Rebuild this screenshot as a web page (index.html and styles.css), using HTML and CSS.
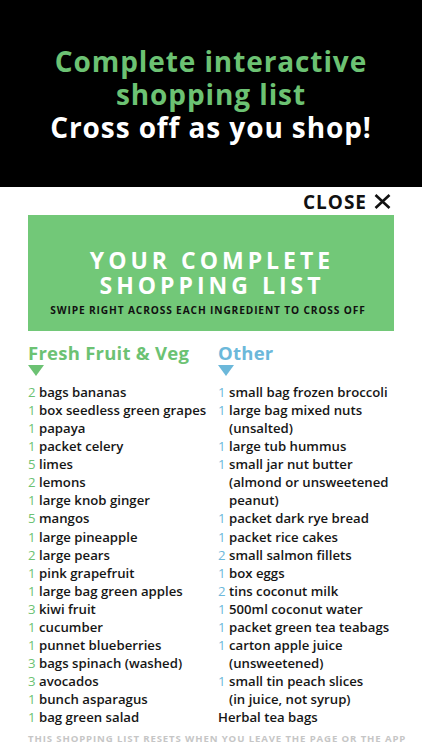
FILE: index.html
```html
<!DOCTYPE html>
<html>
<head>
<meta charset="utf-8">
<link rel="stylesheet" href="styles.css">
</head>
<body>
<header class="hero">
  <p class="hero-text"><span class="green">Complete interactive<br>shopping list</span><br><span class="white">Cross off as you shop!</span></p>
</header>
<div class="close-row">
  <span class="close">CLOSE</span>
  <svg class="close-x" width="17" height="15" viewBox="0 0 17 15"><path d="M1.5 1 L15.5 14 M15.5 1 L1.5 14" stroke="#111" stroke-width="2.6" fill="none"/></svg>
</div>
<section class="banner">
  <p class="banner-title">YOUR COMPLETE<br>SHOPPING LIST</p>
  <p class="banner-sub">SWIPE RIGHT ACROSS EACH INGREDIENT TO CROSS OFF</p>
</section>
<main class="columns">
  <div class="col fruit">
    <h2 class="heading">Fresh Fruit &amp; Veg</h2>
    <div class="tri"></div>
    <ul class="list">
      <li><span class="n">2</span><span class="t">bags bananas</span></li>
      <li><span class="n">1</span><span class="t">box seedless green grapes</span></li>
      <li><span class="n">1</span><span class="t">papaya</span></li>
      <li><span class="n">1</span><span class="t">packet celery</span></li>
      <li><span class="n">5</span><span class="t">limes</span></li>
      <li><span class="n">2</span><span class="t">lemons</span></li>
      <li><span class="n">1</span><span class="t">large knob ginger</span></li>
      <li><span class="n">5</span><span class="t">mangos</span></li>
      <li><span class="n">1</span><span class="t">large pineapple</span></li>
      <li><span class="n">2</span><span class="t">large pears</span></li>
      <li><span class="n">1</span><span class="t">pink grapefruit</span></li>
      <li><span class="n">1</span><span class="t">large bag green apples</span></li>
      <li><span class="n">3</span><span class="t">kiwi fruit</span></li>
      <li><span class="n">1</span><span class="t">cucumber</span></li>
      <li><span class="n">1</span><span class="t">punnet blueberries</span></li>
      <li><span class="n">3</span><span class="t">bags spinach (washed)</span></li>
      <li><span class="n">3</span><span class="t">avocados</span></li>
      <li><span class="n">1</span><span class="t">bunch asparagus</span></li>
      <li><span class="n">1</span><span class="t">bag green salad</span></li>
    </ul>
  </div>
  <div class="col other">
    <h2 class="heading">Other</h2>
    <div class="tri"></div>
    <ul class="list">
      <li><span class="n">1</span><span class="t">small bag frozen broccoli</span></li>
      <li><span class="n">1</span><span class="t">large bag mixed nuts<br>(unsalted)</span></li>
      <li><span class="n">1</span><span class="t">large tub hummus</span></li>
      <li><span class="n">1</span><span class="t">small jar nut butter<br>(almond or unsweetened<br>peanut)</span></li>
      <li><span class="n">1</span><span class="t">packet dark rye bread</span></li>
      <li><span class="n">1</span><span class="t">packet rice cakes</span></li>
      <li><span class="n">2</span><span class="t">small salmon fillets</span></li>
      <li><span class="n">1</span><span class="t">box eggs</span></li>
      <li><span class="n">2</span><span class="t">tins coconut milk</span></li>
      <li><span class="n">1</span><span class="t">500ml coconut water</span></li>
      <li><span class="n">1</span><span class="t">packet green tea teabags</span></li>
      <li><span class="n">1</span><span class="t">carton apple juice<br>(unsweetened)</span></li>
      <li><span class="n">1</span><span class="t">small tin peach slices<br>(in juice, not syrup)</span></li>
      <li class="plain"><span class="t">Herbal tea bags</span></li>
    </ul>
  </div>
</main>
<footer class="foot">THIS SHOPPING LIST RESETS WHEN YOU LEAVE THE PAGE OR THE APP</footer>
</body>
</html>
```
FILE: styles.css
```css
* { box-sizing: border-box; }
html, body { margin: 0; padding: 0; background: #fff; }
body {
  width: 422px;
  font-family: "Open Sans", "Liberation Sans", sans-serif;
  color: #161616;
}
.hero {
  background: #000;
  height: 187px;
  padding-top: 45px;
  text-align: center;
}
.hero-text {
  margin: 0;
  font-size: 28px;
  line-height: 33px;
  font-weight: 700;
  letter-spacing: 0.9px;
}
.green { color: #6cc273; }
.white { color: #fff; }
.close-row {
  display: flex;
  justify-content: flex-end;
  align-items: center;
  gap: 7px;
  height: 28px;
  padding-right: 31px;
  padding-top: 1px;
}
.close {
  font-size: 19px;
  font-weight: 700;
  letter-spacing: 1px;
  line-height: 20px;
  color: #111;
}
.close-x { display: block; }
.banner {
  margin: 0 28px;
  height: 116px;
  background: #72c878;
  text-align: center;
  padding-top: 33px;
  color: #fff;
}
.banner-title {
  margin: 0;
  font-size: 23px;
  font-weight: 700;
  line-height: 25px;
  letter-spacing: 4px;
  padding-left: 2px;
}
.banner-sub {
  margin: 5px 0 0;
  color: #111;
  font-size: 10.2px;
  font-weight: 700;
  letter-spacing: 0.85px;
  line-height: 14px;
  white-space: nowrap;
  padding-right: 6px;
}
.columns {
  display: grid;
  grid-template-columns: 190px 1fr;
  padding: 0 0 0 28px;
  margin-top: 10px;
}
.heading {
  margin: 0;
  font-size: 18.5px;
  line-height: 23px;
  font-weight: 700;
  letter-spacing: 0.25px;
}
.fruit .heading { color: #6cc273; }
.other .heading { color: #6cb8da; }
.tri {
  margin-top: 1px;
  width: 0;
  height: 0;
  border-left: 8px solid transparent;
  border-right: 8px solid transparent;
  border-top: 11px solid #6cc273;
}
.other .tri { border-top-color: #6cb8da; }
.list {
  list-style: none;
  margin: 7px 0 0;
  padding: 0;
}
.list li {
  display: flex;
  font-size: 13.2px;
  line-height: 18.06px;
  font-weight: 600;
  white-space: nowrap;
}
.n { width: 11px; flex: none; font-weight: 500; }
.fruit .n { color: #6cc273; }
.other .n { color: #6cb8da; }
.foot {
  margin: 6px 0 0 28px;
  font-size: 9.6px;
  line-height: 14px;
  font-weight: 700;
  letter-spacing: 0.88px;
  color: #c6c6c6;
  white-space: nowrap;
}
```
